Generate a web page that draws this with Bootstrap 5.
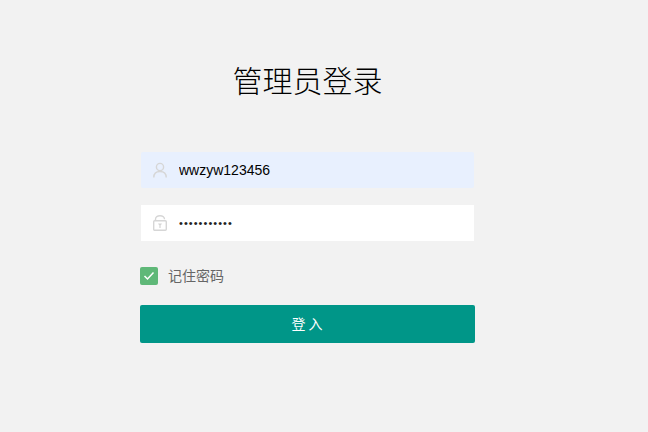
<!DOCTYPE html>
<html lang="zh">
<head>
<meta charset="utf-8">
<title>管理员登录</title>
<link rel="stylesheet" href="https://cdn.jsdelivr.net/npm/bootstrap@5.3.0/dist/css/bootstrap.min.css">
<style>
html,body{height:100%;overflow:hidden}
body{background:#f2f2f2;font-family:"Liberation Sans","Noto Sans CJK SC",sans-serif;color:#333}
.login-wrap{width:335px;margin-left:140px;padding-top:59px}
.login-title{font-size:30px;line-height:46px;font-weight:300;color:#000;margin:0 0 46px;text-align:center;font-family:"Liberation Sans","Noto Sans CJK SC",sans-serif}
.field{height:38px;padding:1px;margin-bottom:15px}
.field-box{height:36px;background:#fff;padding-left:12px;gap:12px}
.field-box.filled{background:#e8f0fe;border-radius:2px}
.field-box input{border:0;outline:0;background:transparent;padding:0;flex:1;min-width:0;font-size:14px;color:#000;font-family:inherit;height:36px}
.field-box input[type=password]{font-size:11px;letter-spacing:1.05px;color:#222}
.field-box svg{flex:none}
.remember{margin-top:25px;margin-bottom:20px;height:18px;gap:10px;font-size:14px;color:#666}
.tick{width:18px;height:18px;background:#5fb878;border-radius:2px}
.btn-enter{height:38px;background:#009688;color:#fff;font-size:14px;border:0;border-radius:2px;padding:1px 0 0 2px;letter-spacing:3px}
.btn-enter:hover{background:#009688;color:#fff}
</style>
</head>
<body>
<main class="login-wrap">
  <h1 class="login-title">管理员登录</h1>
  <form>
    <div class="field">
      <div class="field-box filled d-flex align-items-center">
        <svg width="14" height="16" viewBox="0 0 14 16" fill="none" stroke="#d6d6d6" stroke-width="1.4"><circle cx="7" cy="5" r="3.6"/><path d="M.8 15.500c0-3.600 2.400-6 6.200-6s6.200 2.400 6.200 6"/></svg>
        <input type="text" value="wwzyw123456" aria-label="用户名">
      </div>
    </div>
    <div class="field">
      <div class="field-box d-flex align-items-center">
        <svg width="14" height="16" viewBox="0 0 14 16" fill="none" stroke="#d6d6d6" stroke-width="1.4"><rect x=".7" y="5.700" width="12.600" height="9.600" rx="1"/><path d="M2.500 5.500V4.300C2.500 2 4.500.8 7 .8s4.500 1.200 4.500 3.500"/><path d="M5 8.500h4L7 11.500z" fill="#d6d6d6" stroke="none"/><path d="M7 11v2" stroke-width="1.200"/></svg>
        <input type="password" value="wwzyw123456" aria-label="密码">
      </div>
    </div>
    <div class="remember d-flex align-items-center">
      <span class="tick d-flex align-items-center justify-content-center">
        <svg width="12" height="10" viewBox="0 0 12 10" fill="none" stroke="#fff" stroke-width="1.500"><path d="M1.500 5l3 3 6-6.500"/></svg>
      </span>
      <span>记住密码</span>
    </div>
    <button type="button" class="btn btn-enter w-100">登入</button>
  </form>
</main>
<script src="https://cdn.jsdelivr.net/npm/bootstrap@5.3.0/dist/js/bootstrap.bundle.min.js"></script>
</body>
</html>
